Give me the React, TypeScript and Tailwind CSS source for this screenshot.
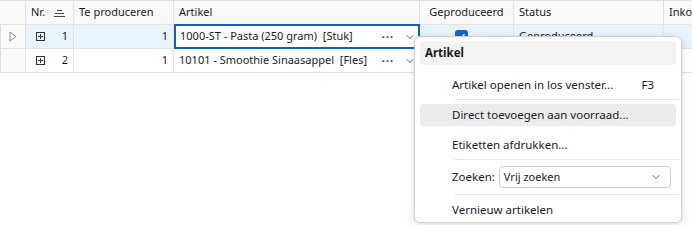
import { ChevronDown } from "lucide-react";

const FONT = "font-['Segoe_UI','Noto_Sans','Liberation_Sans',sans-serif]";

const COLS = [
  { key: "ind", w: "w-[26px]" },
  { key: "nr", w: "w-[48px]" },
  { key: "te", w: "w-[100px]" },
  { key: "art", w: "w-[246px]" },
  { key: "gep", w: "w-[94px]" },
  { key: "status", w: "w-[150px]" },
  { key: "ink", w: "flex-1" },
];

const ROWS = [
  { nr: 1, te: 1, art: "1000-ST - Pasta (250 gram)  [Stuk]", status: "Geproduceerd", active: true },
  { nr: 2, te: 1, art: "10101 - Smoothie Sinaasappel  [Fles]", status: "", active: false },
];

function ExpandBox() {
  return (
    <svg width="9" height="9" viewBox="0 0 9 9" className="shrink-0">
      <rect x="0.5" y="0.5" width="8" height="8" fill="none" stroke="#333" />
      <path d="M2 4.5h5M4.5 2v5" stroke="#333" />
    </svg>
  );
}

function SortIcon() {
  return (
    <svg width="11" height="8" viewBox="0 0 11 8">
      <path d="M3 1.5h5M1 4.5h9M0 7.5h11" stroke="#444" />
    </svg>
  );
}

function Grid() {
  return (
    <div className="border-t border-[#e0e0e0] text-[11px] text-[#1b1b1b]">
      {/* header */}
      <div className="flex h-[24px] bg-[#f9f9f9] border-b border-[#e3e3e3]">
        <div className={`${COLS[0].w} border-r border-[#e3e3e3]`} />
        <div className={`${COLS[1].w} border-r border-[#e3e3e3] flex items-center justify-between pl-[5px] pr-[8px]`}>
          <span>Nr.</span>
          <SortIcon />
        </div>
        <div className={`${COLS[2].w} border-r border-[#e3e3e3] flex items-center pl-[5px]`}>Te produceren</div>
        <div className={`${COLS[3].w} border-r border-[#e3e3e3] flex items-center pl-[5px]`}>Artikel</div>
        <div className={`${COLS[4].w} border-r border-[#e3e3e3] flex items-center justify-center`}>Geproduceerd</div>
        <div className={`${COLS[5].w} border-r border-[#e3e3e3] flex items-center pl-[5px]`}>Status</div>
        <div className="flex-1 min-w-0 flex items-center pl-[5px] whitespace-nowrap overflow-hidden">Inkoo</div>
      </div>
      {ROWS.map((r) => (
        <div key={r.nr} className="flex h-[24px]">
          <div className={`${COLS[0].w} bg-[#f9f9f9] border-l border-r border-b border-[#e3e3e3] flex items-center justify-center`}>
            {r.active && (
              <svg width="8" height="11" viewBox="0 0 8 11">
                <path d="M1 1l6 4.5L1 10z" fill="none" stroke="#8a8a8a" />
              </svg>
            )}
          </div>
          <div className={`${COLS[1].w} ${r.active ? "bg-[#e8f3fd]" : "bg-white"} border-r border-b border-[#e3e3e3] flex items-center justify-between pl-[10px] pr-[5px]`}>
            <ExpandBox />
            <span>{r.nr}</span>
          </div>
          <div className={`${COLS[2].w} ${r.active ? "bg-[#e8f3fd]" : "bg-white"} border-r border-b border-[#e3e3e3] flex items-center justify-end pr-[5px]`}>
            {r.te}
          </div>
          <div
            className={`${COLS[3].w} flex items-center ${
              r.active
                ? "border-2 border-[#0f62b5] bg-white -mt-px h-[25px] pl-[4px] pr-[2px]"
                : "border-r border-b border-[#e3e3e3] pl-[5px] pr-[3px]"
            }`}
          >
            <span className="flex-1 min-w-0 overflow-hidden whitespace-pre">{r.art}</span>
            <span className="tracking-[1px] font-bold text-[#333] mr-[10px] leading-none">···</span>
            <ChevronDown size={12} strokeWidth={1.5} className="text-[#333] shrink-0" />
          </div>
          <div className={`${COLS[4].w} ${r.active ? "bg-[#e8f3fd]" : "bg-white"} border-r border-b border-[#e3e3e3] flex items-center justify-center pr-[10px]`}>
            {r.active && (
              <div className="w-[13px] h-[13px] rounded-[3px] bg-[#1565c0] flex items-center justify-center">
                <svg width="9" height="9" viewBox="0 0 9 9">
                  <path d="M1.5 4.8l2 2 4-4.5" fill="none" stroke="white" strokeWidth="1.3" />
                </svg>
              </div>
            )}
          </div>
          <div className={`${COLS[5].w} ${r.active ? "bg-[#e8f3fd]" : "bg-white"} border-r border-b border-[#e3e3e3] flex items-center pl-[5px]`}>
            {r.status}
          </div>
          <div className={`flex-1 ${r.active ? "bg-[#e8f3fd]" : "bg-white"} border-b border-[#e3e3e3]`} />
        </div>
      ))}
    </div>
  );
}

function Separator({ mt, mb }: { mt: string; mb: string }) {
  return <div className={`h-px bg-[#e5e5e5] ml-[40px] mr-[2px] ${mt} ${mb}`} />;
}

function Item({ label, shortcut, hot }: { label: string; shortcut?: string; hot?: boolean }) {
  return (
    <div
      className={`mx-[5px] h-[22px] rounded-[4px] flex items-center pl-[32px] pr-[22px] whitespace-nowrap ${
        hot ? "bg-[#ececec]" : ""
      }`}
    >
      <span className="flex-1">{label}</span>
      {shortcut && <span>{shortcut}</span>}
    </div>
  );
}

function ContextMenu() {
  return (
    <div className="absolute left-[414px] top-[36px] w-[268px] h-[187px] bg-white border border-[#cfcfcf] rounded-[6px] shadow-[0_2px_8px_rgba(0,0,0,0.15)] text-[11.5px] text-[#1b1b1b] pt-[4px]">
      <div className="mx-[5px] h-[24px] rounded-[4px] bg-[#f3f3f3] flex items-center pl-[5px] font-bold">Artikel</div>
      <div className="h-[9px]" />
      <Item label="Artikel openen in los venster..." shortcut="F3" />
      <Separator mt="mt-[3px]" mb="mb-[4px]" />
      <Item label="Direct toevoegen aan voorraad..." hot />
      <div className="h-[8px]" />
      <Item label="Etiketten afdrukken..." />
      <Separator mt="mt-[3px]" mb="mb-[4px]" />
      <div className="mx-[5px] h-[26px] flex items-center pl-[32px] pr-[5px] gap-[4px] whitespace-nowrap">
        <span>Zoeken:</span>
        <div className="flex-1 h-[22px] border border-[#cfcfcf] rounded-[4px] flex items-center justify-between pl-[4px] pr-[8px] text-[11px]">
          <span>Vrij zoeken</span>
          <ChevronDown size={12} strokeWidth={1.5} className="text-[#333]" />
        </div>
      </div>
      <Separator mt="mt-[4px]" mb="mb-[4px]" />
      <Item label="Vernieuw artikelen" />
    </div>
  );
}

export default function App() {
  return (
    <div className={`relative w-[692px] h-[225px] bg-white overflow-hidden ${FONT}`}>
      <Grid />
      <ContextMenu />
    </div>
  );
}
